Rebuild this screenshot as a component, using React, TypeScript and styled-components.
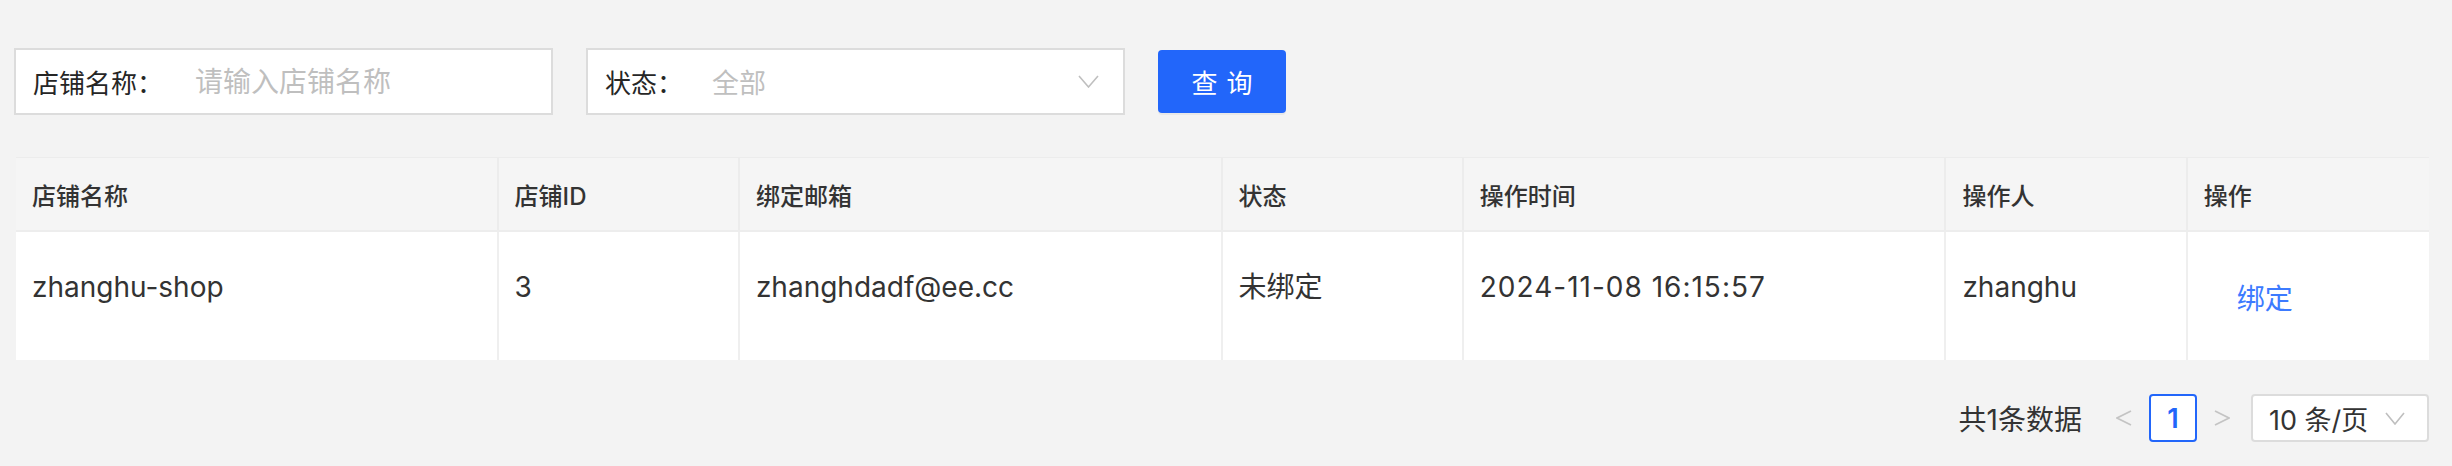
import React from "react";
import styled, { createGlobalStyle } from "styled-components";

const GlobalStyle = createGlobalStyle`
  body {
    margin: 0;
    background: #f3f3f3;
    font-family: Inter, "Noto Sans CJK SC", sans-serif;
    color: #333;
  }
`;

type Shop = {
  name: string;
  id: number;
  email: string;
  status: string;
  time: string;
  operator: string;
};

const shops: Shop[] = [
  {
    name: "zhanghu-shop",
    id: 3,
    email: "zhanghdadf@ee.cc",
    status: "未绑定",
    time: "2024-11-08 16:15:57",
    operator: "zhanghu"
  }
];

const columns = ["店铺名称", "店铺ID", "绑定邮箱", "状态", "操作时间", "操作人", "操作"];

const Chevron = ({ w, h }: { w: number; h: number }) => (
  <svg width={w} height={h} viewBox={`0 0 ${w} ${h}`} fill="none">
    <polyline
      points={`1,1 ${w / 2},${h - 1} ${w - 1},1`}
      stroke="#bfbfbf"
      strokeWidth="1.6"
    />
  </svg>
);

const Arrow = ({ dir }: { dir: "left" | "right" }) => (
  <svg width="16" height="16" viewBox="0 0 16 16" fill="none">
    <polyline
      points={dir === "left" ? "15,1 1,8 15,15" : "1,1 15,8 1,15"}
      stroke="#c4c4c4"
      strokeWidth="1.8"
    />
  </svg>
);

export default function App() {
  return (
    <Page>
      <GlobalStyle />
      <FilterBar>
        <Field>
          <FieldLabel $gap={32}>店铺名称：</FieldLabel>
          <TextInput placeholder="请输入店铺名称" />
        </Field>
        <Field>
          <FieldLabel $gap={29}>状态：</FieldLabel>
          <SelectValue>全部</SelectValue>
          <Chevron w={21} h={13} />
        </Field>
        <SearchButton>查询</SearchButton>
      </FilterBar>

      <Table>
        <HeadRow>
          {columns.map((c) => (
            <HeadCell key={c}>{c}</HeadCell>
          ))}
        </HeadRow>
        {shops.map((s) => (
          <Row key={s.id}>
            <Cell>{s.name}</Cell>
            <Cell>{s.id}</Cell>
            <Cell>{s.email}</Cell>
            <Cell>{s.status}</Cell>
            <Cell $wide>{s.time}</Cell>
            <Cell>{s.operator}</Cell>
            <ActionCell>
              <LinkButton>绑定</LinkButton>
            </ActionCell>
          </Row>
        ))}
      </Table>

      <Pager>
        <Total>共1条数据</Total>
        <ArrowBox>
          <Arrow dir="left" />
        </ArrowBox>
        <PageItem>1</PageItem>
        <ArrowBox>
          <Arrow dir="right" />
        </ArrowBox>
        <SizeSelect>
          <span>10 条/页</span>
          <Chevron w={20} h={13} />
        </SizeSelect>
      </Pager>
    </Page>
  );
}

const Page = styled.div`
  padding: 48px 23px 24px 14px;
`;

const FilterBar = styled.div`
  display: flex;
  align-items: center;
  gap: 33px;
`;

const Field = styled.div`
  box-sizing: border-box;
  width: 539px;
  height: 67px;
  display: flex;
  align-items: center;
  padding: 0 24px 0 17px;
  background: #fff;
  border: 2px solid #dcdcdc;
`;

const FieldLabel = styled.span<{ $gap: number }>`
  font-size: 26px;
  color: #262626;
  white-space: nowrap;
  margin-right: ${(p) => p.$gap}px;
`;

const TextInput = styled.input`
  flex: 1;
  min-width: 0;
  border: none;
  outline: none;
  padding: 0;
  background: transparent;
  font-family: inherit;
  font-size: 28px;
  color: #333;
  &::placeholder {
    color: #bfbfbf;
  }
`;

const SelectValue = styled.span`
  flex: 1;
  font-size: 27px;
  color: #bfbfbf;
`;

const SearchButton = styled.button`
  width: 128px;
  height: 63px;
  border: none;
  border-radius: 4px;
  background: #2266fa;
  color: #fff;
  font-family: inherit;
  font-size: 26px;
  letter-spacing: 0.34em;
  text-indent: 0.34em;
  box-shadow: 0 2px 0 rgba(0, 0, 0, 0.045);
  cursor: pointer;
`;

const Table = styled.div`
  margin: 42px 0 0 2px;
  background: #fff;
  border-top: 1px solid #ececec;
`;

const HeadRow = styled.div`
  display: grid;
  grid-template-columns: 2fr 1fr 2fr 1fr 2fr 1fr 1fr;
  height: 72px;
  background: #f5f5f5;
  border-bottom: 2px solid #ededed;
`;

const HeadCell = styled.div`
  display: flex;
  align-items: center;
  padding: 0 16px;
  font-size: 24px;
  font-weight: 500;
  color: #333;
  border-right: 2px solid #ececec;
  &:last-child {
    border-right: none;
  }
`;

const Row = styled.div`
  display: grid;
  grid-template-columns: 2fr 1fr 2fr 1fr 2fr 1fr 1fr;
  height: 128px;
`;

const Cell = styled.div<{ $wide?: boolean }>`
  padding: 35px 16px 0;
  font-size: 28px;
  line-height: 40px;
  color: #333;
  letter-spacing: ${(p) => (p.$wide ? "1px" : "0")};
  border-right: 2px solid #efefef;
`;

const ActionCell = styled.div`
  display: flex;
  align-items: center;
  padding: 2px 16px 0;
`;

const LinkButton = styled.span`
  padding: 0 33px;
  font-size: 28px;
  color: #3d7bff;
  cursor: pointer;
`;

const Pager = styled.div`
  display: flex;
  justify-content: flex-end;
  align-items: center;
  margin-top: 34px;
`;

const Total = styled.span`
  font-size: 28px;
  color: #333;
  margin-right: 34px;
`;

const ArrowBox = styled.span`
  display: flex;
  align-items: center;
  margin: 0 17px 0 0;
  &:last-of-type {
    margin: 0 21px 0 17px;
  }
`;

const PageItem = styled.span`
  box-sizing: border-box;
  width: 48px;
  height: 48px;
  display: flex;
  align-items: center;
  justify-content: center;
  border: 2px solid #2266fa;
  border-radius: 4px;
  background: #fff;
  color: #2266fa;
  font-size: 27px;
  font-weight: 600;
`;

const SizeSelect = styled.div`
  box-sizing: border-box;
  width: 178px;
  height: 48px;
  display: flex;
  align-items: center;
  justify-content: space-between;
  padding: 0 22px 0 16px;
  background: #fff;
  border: 2px solid #dcdcdc;
  border-radius: 4px;
  font-size: 27px;
  color: #333;
`;
